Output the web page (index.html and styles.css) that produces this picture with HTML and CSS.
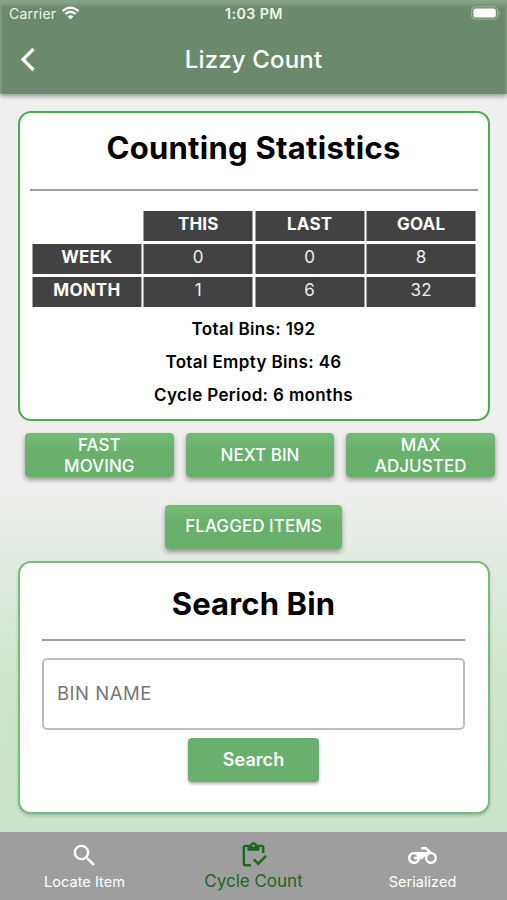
FILE: index.html
```html
<!DOCTYPE html>
<html lang="en">
<head>
<meta charset="utf-8">
<title>Lizzy Count</title>
<link rel="stylesheet" href="styles.css">
</head>
<body>
<div class="app">
  <header class="header">
    <div class="status">
      <div class="carrier"><span>Carrier</span>
        <svg class="wifi" viewBox="0 0 18 14"><path d="M1 5.2Q9-2 17 5.2M3.8 8Q9 3.4 14.2 8" fill="none" stroke="currentColor" stroke-width="2.3"/><path d="M6.1 10.3Q9 8 11.9 10.3L9 13.5Z" fill="currentColor"/></svg>
      </div>
      <div class="clock">1:03 PM</div>
      <div class="power"><svg class="battery" viewBox="0 0 30 14"><rect x=".7" y=".7" width="25.8" height="12.6" rx="3.8" fill="none" stroke="#9bb39b" stroke-width="1.1"/><rect x="2.4" y="2.4" width="22.4" height="9.2" rx="2" fill="#fff"/><path d="M27.7 5Q30.3 7 27.7 9Z" fill="#9bb39b"/></svg></div>
    </div>
    <div class="titlebar">
      <svg class="back" viewBox="0 0 16 25"><path d="M13.5 2 3 12.5 13.5 23" fill="none" stroke="currentColor" stroke-width="3.2"/></svg>
      <h1>Lizzy Count</h1>
    </div>
  </header>
  <main class="content">
    <section class="card stats">
      <h2>Counting Statistics</h2>
      <hr>
      <div class="table">
        <span></span><b>THIS</b><b>LAST</b><b>GOAL</b>
        <b>WEEK</b><i>0</i><i>0</i><i>8</i>
        <b>MONTH</b><i>1</i><i>6</i><i>32</i>
      </div>
      <p>Total Bins: 192</p>
      <p>Total Empty Bins: 46</p>
      <p>Cycle Period: 6 months</p>
    </section>
    <div class="actions">
      <button>FAST<br>MOVING</button>
      <button>NEXT BIN</button>
      <button>MAX<br>ADJUSTED</button>
    </div>
    <button class="flagged">FLAGGED ITEMS</button>
    <section class="card search">
      <h2>Search Bin</h2>
      <hr>
      <input type="text" placeholder="BIN NAME">
      <button class="submit">Search</button>
    </section>
  </main>
  <nav class="tabs">
    <div class="tab"><svg viewBox="0 0 24 24"><path d="M15.5 14h-.79l-.28-.27A6.47 6.47 0 0 0 16 9.5 6.5 6.5 0 1 0 9.5 16c1.61 0 3.09-.59 4.23-1.57l.27.28v.79l5 4.99L20.49 19zm-6 0C7.01 14 5 11.99 5 9.5S7.01 5 9.5 5 14 7.01 14 9.5 11.99 14 9.5 14z"/></svg><span>Locate Item</span></div>
    <div class="tab active"><svg viewBox="0 0 24 24"><path d="M5 5h2v3h10V5h2v5h2V5c0-1.1-.9-2-2-2h-4.18C14.4 1.84 13.3 1 12 1s-2.4.84-2.82 2H5c-1.1 0-2 .9-2 2v14c0 1.1.9 2 2 2h5v-2H5V5zm7-2c.55 0 1 .45 1 1s-.45 1-1 1-1-.45-1-1 .45-1 1-1z"/><path d="M21.6 11.6 15.9 17.3 13 14.4 11.5 15.9 15.9 20.3 23.1 13.1z"/></svg><span>Cycle Count</span></div>
    <div class="tab"><svg viewBox="0 0 24 24"><path d="M19.44 9.03 15.41 5H11v2h3.59l2 2H5c-2.8 0-5 2.2-5 5s2.2 5 5 5c2.46 0 4.45-1.69 4.9-4h1.65l2.77-2.77c-.21.54-.32 1.14-.32 1.77 0 2.8 2.2 5 5 5s5-2.2 5-5c0-2.65-1.97-4.77-4.56-4.97zM7.82 15C7.4 16.15 6.28 17 5 17c-1.63 0-3-1.37-3-3s1.37-3 3-3c1.28 0 2.4.85 2.82 2H5v2h2.82zM19 17c-1.66 0-3-1.34-3-3s1.34-3 3-3 3 1.34 3 3-1.34 3-3 3z"/></svg><span>Serialized</span></div>
  </nav>
</div>
</body>
</html>
```

FILE: styles.css
```css
* { box-sizing: border-box; }
body { margin: 0; font-family: Inter, "Liberation Sans", sans-serif; color: #000; }
.app {
  width: 507px; height: 900px; display: flex; flex-direction: column; overflow: hidden;
  background: linear-gradient(#efefef 0, #efefef 490px, #e3ebe3 555px, #cde6cd 680px, #c9e5ca 830px);
}
.header {
  height: 94px; flex: none; color: #fff; background: #6a8b6b;
  box-shadow: inset 0 7px 4px -2px #85a586, inset 3px 0 3px -2px #85a586, inset -3px 0 3px -2px #85a586, 0 2px 5px rgba(0,0,0,.4);
}
.status { height: 27px; display: grid; grid-template-columns: 1fr auto 1fr; align-items: center; padding: 0 6px 0 9px; font-size: 14px; color: #eef5ec; }
.carrier { display: flex; align-items: center; gap: 5px; letter-spacing: .2px; }
.wifi { width: 19px; height: 14px; color: #fff; margin-top: -2px; }
.clock { font-size: 14.3px; font-weight: 600; letter-spacing: .4px; margin-right: 2px; }
.power { display: flex; justify-content: flex-end; }
.battery { width: 30px; height: 14px; margin-top: -1px; }
.titlebar { height: 65px; display: grid; grid-template-columns: 40px 1fr 40px; align-items: center; }
.back { width: 16px; height: 25px; margin-left: 20px; }
h1 { margin: 0; text-align: center; font-size: 24px; font-weight: 500; letter-spacing: .15px; line-height: 30px; }
.content { flex: 1; display: flex; flex-direction: column; align-items: center; padding-top: 17px; }
.card { width: 472px; background: #fff; border: 2px solid #4caa50; border-radius: 13px; display: flex; flex-direction: column; align-items: center; flex: none; }
h2 { margin: 0; font-size: 31px; font-weight: 700; line-height: 36px; letter-spacing: .28px; }
hr { margin: 0; border: 0; height: 2px; background: #9e9e9e; }
.stats { height: 310px; padding-top: 17px; }
.stats hr { width: 448px; margin-top: 23px; }
.table { width: 443px; margin: 20px 0 6px; display: grid; grid-template-columns: repeat(4, 1fr); grid-template-rows: repeat(3, 30.3px); gap: 2.8px; text-align: center; font-size: 17px; line-height: 26px; color: #fff; }
.table b, .table i { background: #424242; font-style: normal; letter-spacing: .2px; transform: translateX(.5px); }
.table i { color: #eee; }
.table b { font-weight: 700; }
p { margin: 0; font-size: 17px; line-height: 33px; font-weight: 600; letter-spacing: .36px; }
button { font-family: inherit; color: #fff; border: 0; padding: 0; border-radius: 4px; background: linear-gradient(#78bb78, #68b06c 40%, #68af6c); box-shadow: 0 3px 5px rgba(0,0,0,.36); font-size: 17px; font-weight: 500; line-height: 20.5px; letter-spacing: .05px; height: 44px; flex: none; }
.actions { width: 470px; display: flex; gap: 12px; margin: 12px 0 0 13px; }
.actions button { flex: 1; padding-top: 1px; }
.flagged { width: 177px; margin-top: 27.5px; padding-bottom: 1px; }
.search { margin-top: 12.5px; height: 253px; border-color: #76bd7a; padding-top: 23px; box-shadow: 0 2px 3px rgba(0,0,0,.18); }
.search h2 { letter-spacing: .15px; }
.search hr { width: 423px; margin-top: 17px; }
input { width: 423px; height: 72px; margin-top: 17px; padding: 0 13px 2px; border: 2px solid #bdbdbd; border-radius: 5px; font: 400 18.5px Inter, sans-serif; letter-spacing: .5px; background: #fff; }
input::placeholder { color: #757575; opacity: 1; }
.submit { width: 131px; margin-top: 8px; font-size: 18px; font-weight: 600; box-shadow: 0 2px 3px rgba(0,0,0,.3); background: #69b06e; }
.tabs { height: 68px; flex: none; display: grid; grid-template-columns: repeat(3, 1fr); background: #9e9e9e; color: #fff; font-size: 14.5px; }
.tab { display: flex; flex-direction: column; align-items: center; padding-top: 9px; line-height: 20px; letter-spacing: .05px; }
.tab svg { width: 29px; height: 29px; fill: currentColor; }
.tab span { margin-top: 2px; }
.tab.active { color: #1b671f; font-size: 17px; letter-spacing: 0; }
.tab.active span { margin-top: 1px; }
```
